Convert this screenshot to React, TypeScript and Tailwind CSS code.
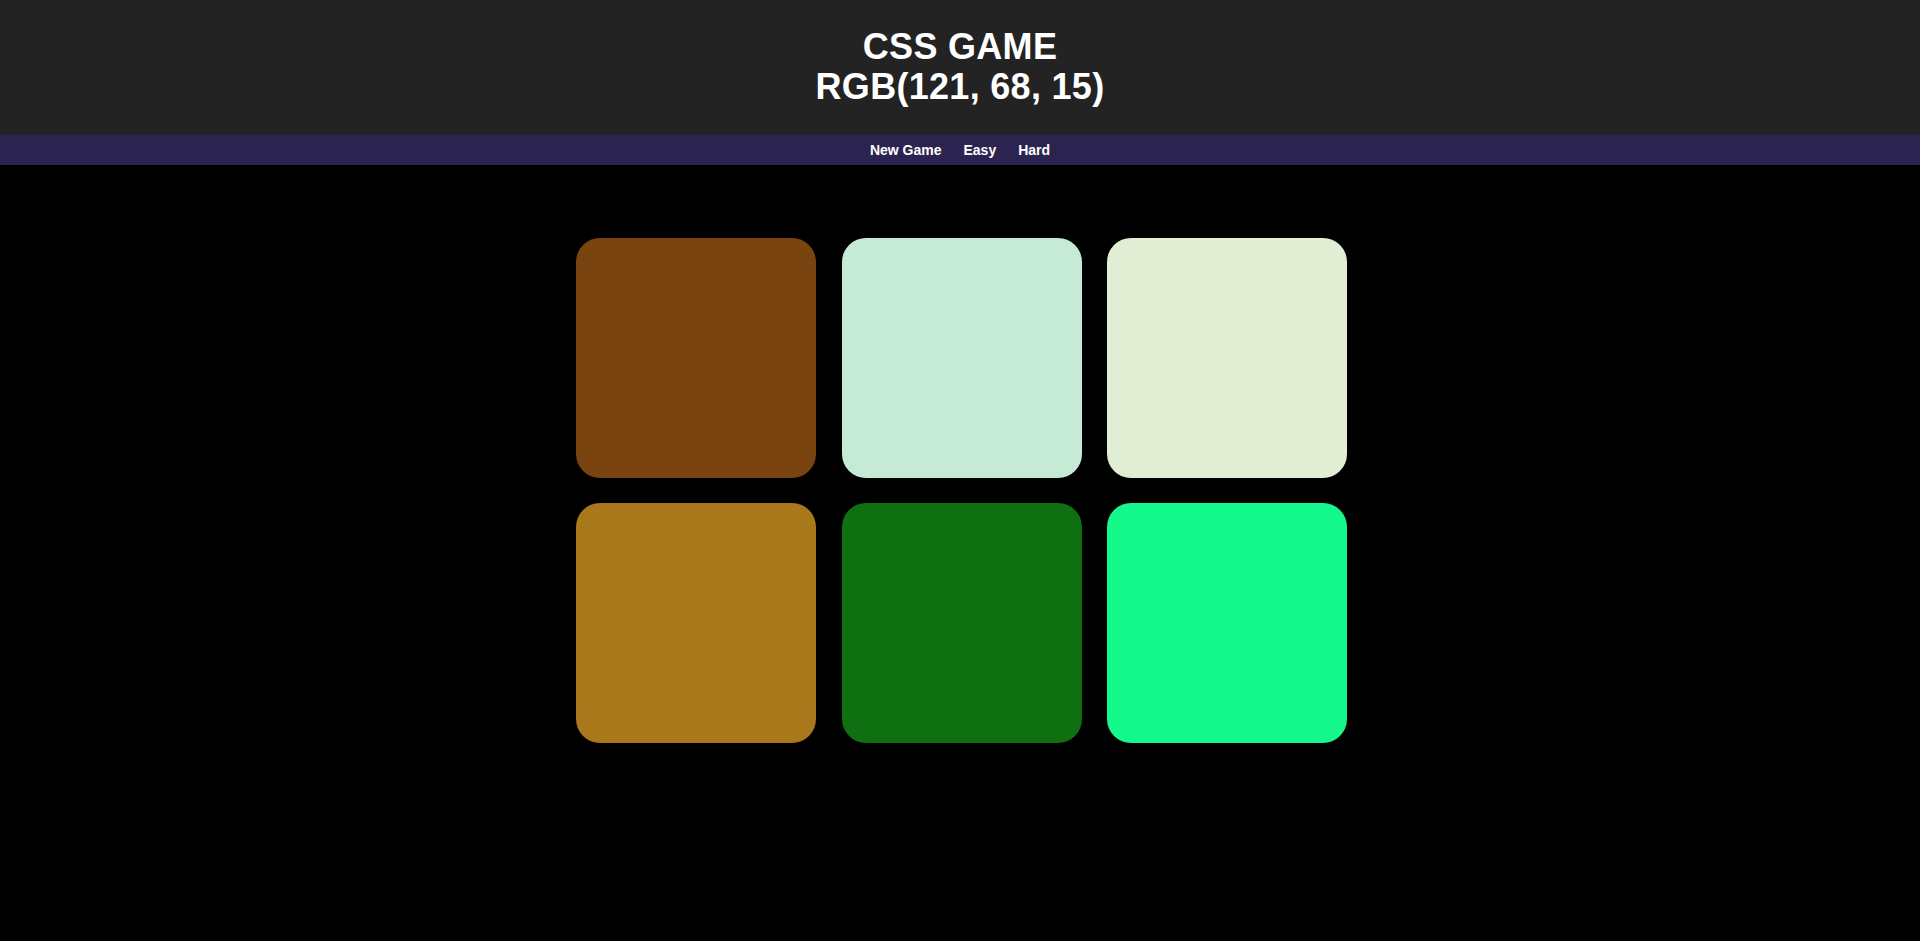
import React from 'react';

const squares = [
  '#79440f',
  '#c5ebd7',
  '#e1eed4',
  '#a8781a',
  '#0f7012',
  '#14f88c',
];

const navItems = ['New Game', 'Easy', 'Hard'];

export default function App() {
  return (
    <div className="min-h-screen bg-black font-['Liberation_Sans',Arial,sans-serif]">
      <header className="bg-[#232323] pt-[27px] pb-[28px] text-center text-white">
        <h1 className="text-[36px] font-bold leading-[40px] tracking-[0.3px]">
          CSS GAME
          <br />
          RGB(121, 68, 15)
        </h1>
      </header>

      <nav className="flex h-[30px] items-center justify-center gap-[22px] bg-[#2c2450] text-[14px] font-bold text-white">
        {navItems.map((item) => (
          <button key={item} className="cursor-pointer">
            {item}
          </button>
        ))}
      </nav>

      <main className="flex justify-center pt-[73px]">
        <div className="grid grid-cols-[repeat(3,240px)] gap-x-[25.5px] gap-y-[25px] pl-[3px]">
          {squares.map((color, i) => (
            <div
              key={i}
              className="h-[240px] w-[240px] rounded-[24px]"
              style={{ backgroundColor: color }}
            />
          ))}
        </div>
      </main>
    </div>
  );
}
